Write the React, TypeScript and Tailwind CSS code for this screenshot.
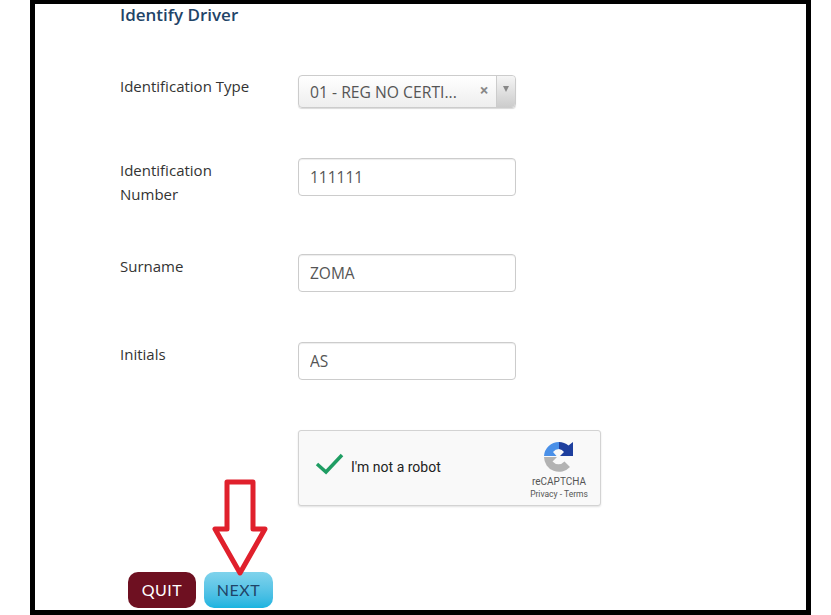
import React from 'react';

const FONT = "font-['Open_Sans','Liberation_Sans',sans-serif]";

const Field = ({ label, value, className }: { label: React.ReactNode; value: string; className: string }) => (
  <div className={`flex ${className}`}>
    <label className="w-[178px] text-[15px] leading-[24px] text-[#333]">{label}</label>
    <input
      readOnly
      value={value}
      className="w-[218px] h-[38px] px-[11px] text-[15.500px] text-[#555] bg-white border border-[#ccc] rounded-[4px] shadow-[inset_0_1px_1px_rgba(0,0,0,0.075)]"
    />
  </div>
);

const RecaptchaLogo = () => (
  <svg width="32" height="32" viewBox="0 0 32 32">
    <path d="M16 1a15 15 0 0 1 9.500 3.500L30 1v14H17l4-4a7 7 0 0 0-5-3z" fill="#1e3f9e" />
    <path d="M16 1v7a8 8 0 0 0-6 3l3.500 4H1A15 15 0 0 1 16 1z" fill="#4a90e8" />
    <path d="M1 16h13l-4.500 4.500a8 8 0 0 0 12 0l5.500 5.500A15 15 0 0 1 1 16z" fill="#b3b3b3" />
  </svg>
);

export default function App() {
  return (
    <div className={`w-[831px] h-[615px] bg-white overflow-hidden ${FONT}`}>
      <div className="relative ml-[30px] w-[781px] h-[615px] border-t-[4px] border-x-[5px] border-b-[5px] border-black pl-[85px] overflow-hidden">
        <h2 className="mt-[-1px] text-[17px] leading-[24px] font-semibold text-[#1f4468]">Identify Driver</h2>

        <div className="flex mt-[48px]">
          <label className="w-[178px] mt-[-1px] text-[15px] leading-[24px] text-[#333]">Identification Type</label>
          <div className="flex w-[218px] h-[33px] border border-[#ccc] rounded-[4px] bg-gradient-to-b from-white to-[#eee] shadow-[0_1px_1px_rgba(0,0,0,0.15)]">
            <span className="flex-1 pl-[11px] text-[15.700px] leading-[33px] whitespace-nowrap text-[#555]">01 - REG NO CERTI...</span>
            <span className="w-[14px] mr-[5px] text-center text-[16px] leading-[28px] font-bold text-[#888]">×</span>
            <span className="flex w-[19px] justify-center border-l border-[#ccc] pt-[10px] rounded-r-[4px] bg-gradient-to-b from-[#f5f5f5] to-[#ccc]">
              <span className="w-0 h-0 border-x-[3px] border-t-[6px] border-x-transparent border-t-[#888]" />
            </span>
          </div>
        </div>

        <Field
          className="mt-[50px]"
          label={<>Identification<br />Number</>}
          value="111111"
        />
        <Field className="mt-[48px]" label="Surname" value="ZOMA" />
        <Field className="mt-[50px]" label="Initials" value="AS" />

        <div className="ml-[178px] mt-[50px] flex w-[303px] h-[76px] bg-[#f9f9f9] border border-[#d3d3d3] rounded-[3px] shadow-[0_1px_2px_rgba(0,0,0,0.12)] font-['Roboto','Liberation_Sans',sans-serif]">
          <svg className="mt-[22px] ml-[16px]" width="30" height="22" viewBox="0 0 30 22">
            <path d="M2 11l9 8L27 2" fill="none" stroke="#1f9d63" strokeWidth="3.500" />
          </svg>
          <span className="ml-[6px] mt-[27px] text-[14px] leading-[18px] text-[#222]">I'm not a robot</span>
          <div className="ml-auto mr-[12px] w-[58px] flex flex-col items-center pt-[10px]">
            <RecaptchaLogo />
            <span className="mt-[2px] text-[10px] leading-[13px] text-[#555]">reCAPTCHA</span>
            <span className="text-[8.500px] leading-[12px] whitespace-nowrap text-[#555]">Privacy - Terms</span>
          </div>
        </div>

        <div className="flex gap-[8px] ml-[8px] mt-[66px] font-['Lato','Liberation_Sans',sans-serif]">
          <button className="w-[68px] h-[36px] rounded-[10px] bg-[#6e1021] text-[16px] tracking-[0.5px] text-white">QUIT</button>
          <button className="w-[69px] h-[36px] rounded-[10px] bg-gradient-to-b from-[#7fd3ec] to-[#17b4e0] text-[16px] tracking-[0.5px] text-[#1f4468]">NEXT</button>
        </div>

        <svg className="absolute left-[175px] top-[473px]" width="60" height="102" viewBox="0 0 60 102">
          <path d="M17 5h26v47h12L30 96 5 52h12z" fill="none" stroke="#e0202c" strokeWidth="5" strokeLinejoin="round" />
        </svg>
      </div>
    </div>
  );
}
